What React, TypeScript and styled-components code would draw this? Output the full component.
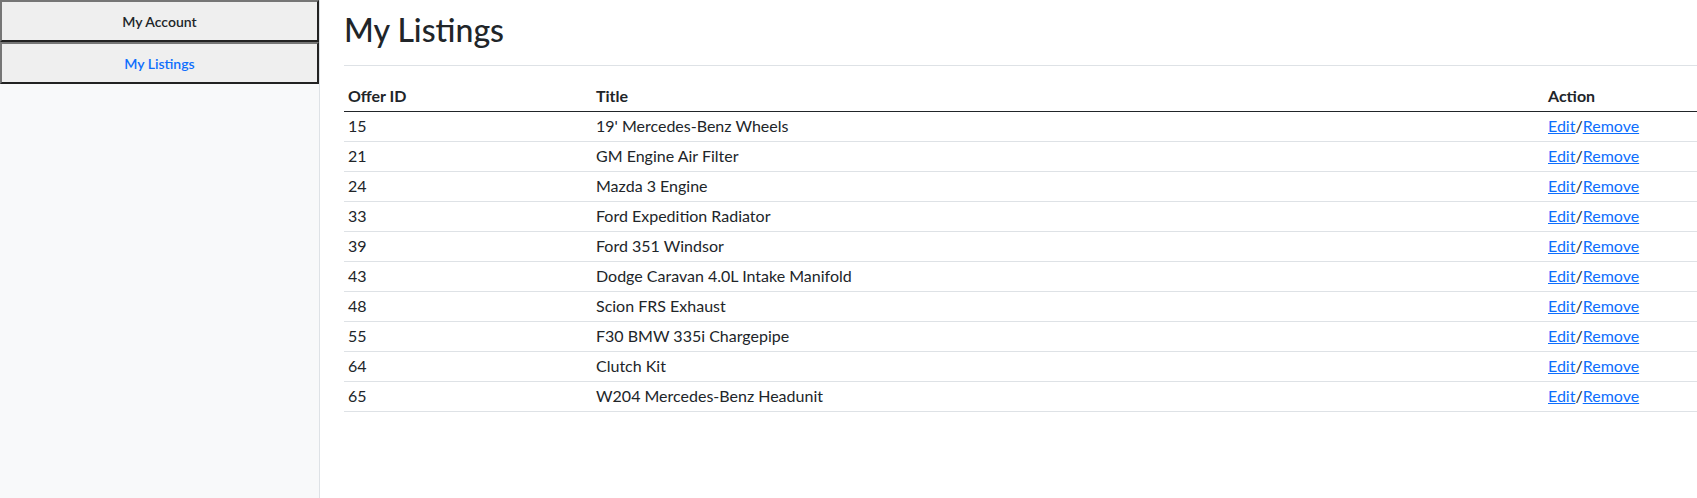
import React from "react";
import styled, { createGlobalStyle } from "styled-components";

const GlobalStyle = createGlobalStyle`
  html, body { margin: 0; padding: 0; }
  body {
    font-family: Lato, "Liberation Sans", sans-serif;
    color: #212529;
    background: #fff;
  }
`;

const Page = styled.div`
  display: flex;
  height: 100vh;
  overflow: hidden;
`;

const Sidebar = styled.nav`
  width: 319px;
  flex: 0 0 319px;
  background: #f8f9fa;
  border-right: 1px solid #dee2e6;
  display: flex;
  flex-direction: column;
`;

const NavButton = styled.button<{ $active?: boolean }>`
  box-sizing: border-box;
  width: 100%;
  height: 42px;
  margin: 0;
  padding: 0;
  background: #efefef;
  border-style: solid;
  border-width: 2px;
  border-color: #767676 #222 #222 #767676;
  font-family: Lato, "Liberation Sans", sans-serif;
  font-size: 14px;
  font-weight: 600;
  color: ${(p) => (p.$active ? "#0d6efd" : "#212529")};
  cursor: pointer;
`;

const Main = styled.main`
  flex: 1;
  min-width: 0;
  padding-left: 24px;
`;

const Heading = styled.h2`
  margin: 11px 0 0;
  font-size: 32px;
  line-height: 38px;
  font-weight: 500;
  color: #212529;
`;

const Rule = styled.hr`
  margin: 16px 0;
  border: 0;
  border-top: 1px solid #dee2e6;
`;

const Table = styled.table`
  width: 100%;
  border-collapse: collapse;
  font-size: 16px;
  color: #212529;
`;

const Th = styled.th<{ $w: number }>`
  width: ${(p) => p.$w}px;
  box-sizing: border-box;
  height: 29px;
  padding: 0 4px;
  text-align: left;
  font-weight: 700;
  line-height: 28px;
  border-bottom: 1px solid #212529;
`;

const Td = styled.td`
  height: 29px;
  padding: 0 4px;
  line-height: 28px;
  border-bottom: 1px solid #dee2e6;
  white-space: nowrap;
`;

const Link = styled.a`
  color: #0d6efd;
  text-decoration: underline;
  cursor: pointer;
`;

const listings: [number, string][] = [
  [15, "19' Mercedes-Benz Wheels"],
  [21, "GM Engine Air Filter"],
  [24, "Mazda 3 Engine"],
  [33, "Ford Expedition Radiator"],
  [39, "Ford 351 Windsor"],
  [43, "Dodge Caravan 4.0L Intake Manifold"],
  [48, "Scion FRS Exhaust"],
  [55, "F30 BMW 335i Chargepipe"],
  [64, "Clutch Kit"],
  [65, "W204 Mercedes-Benz Headunit"],
];

export default function App() {
  return (
    <>
      <GlobalStyle />
      <Page>
        <Sidebar>
          <NavButton>My Account</NavButton>
          <NavButton $active>My Listings</NavButton>
        </Sidebar>
        <Main>
          <Heading>My Listings</Heading>
          <Rule />
          <Table>
            <thead>
              <tr>
                <Th $w={248}>Offer ID</Th>
                <Th $w={952}>Title</Th>
                <Th $w={153}>Action</Th>
              </tr>
            </thead>
            <tbody>
              {listings.map(([id, title]) => (
                <tr key={id}>
                  <Td>{id}</Td>
                  <Td>{title}</Td>
                  <Td>
                    <Link>Edit</Link>/<Link>Remove</Link>
                  </Td>
                </tr>
              ))}
            </tbody>
          </Table>
        </Main>
      </Page>
    </>
  );
}
